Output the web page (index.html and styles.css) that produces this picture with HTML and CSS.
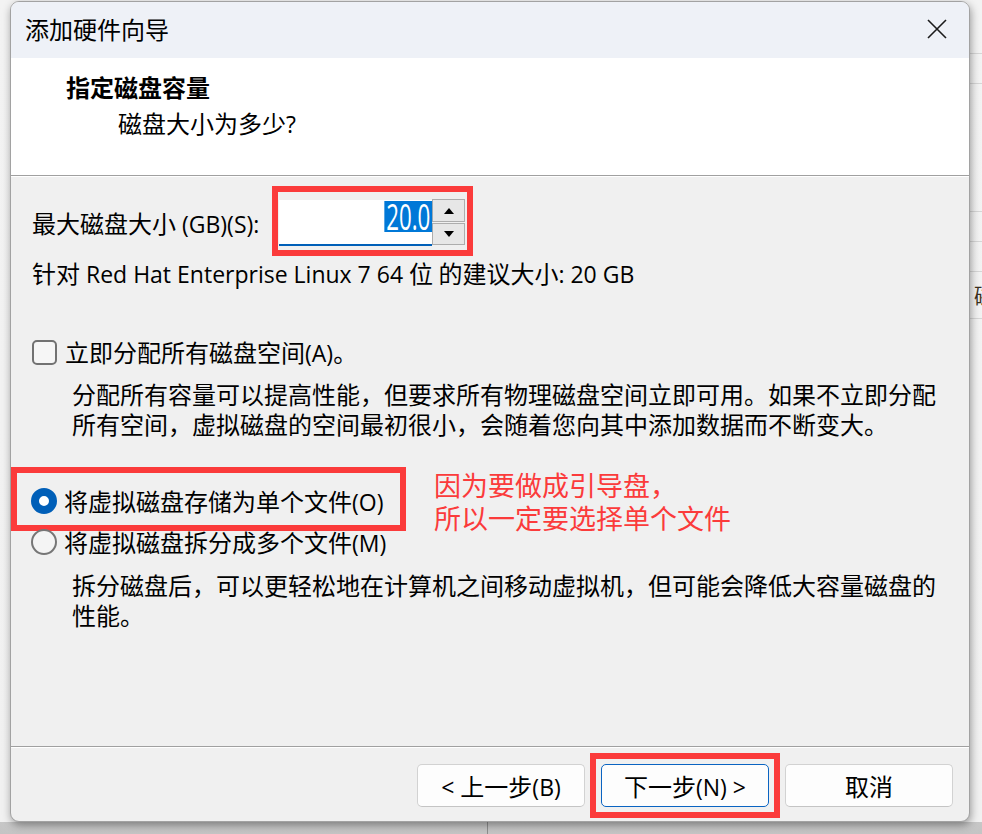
FILE: index.html
```html
<!DOCTYPE html>
<html lang="zh-CN">
<head>
<meta charset="utf-8">
<title>添加硬件向导</title>
<link rel="stylesheet" href="styles.css">
</head>
<body>
<div class="desk">
  <i class="hl" style="top:53px"></i>
  <i class="hl" style="top:83px"></i>
  <i class="hl" style="top:211px"></i>
  <i class="hl" style="top:241px"></i>
  <i class="hl" style="top:271px"></i>
  <i class="hl" style="top:318px"></i>
  <span class="frag">磁</span>
  <i class="vl"></i>
</div>
<div class="window">
  <div class="titlebar">
    <span class="title">添加硬件向导</span>
    <svg class="close" width="20" height="20" viewBox="0 0 20 20"><path d="M1 1L19 19M19 1L1 19" stroke="#1b1b1b" stroke-width="1.6" fill="none"/></svg>
  </div>
  <div class="header">
    <div class="h1">指定磁盘容量</div>
    <div class="h2">磁盘大小为多少<span class="en">?</span></div>
  </div>
  <div class="content">
    <div class="size-row">
      <span class="lbl">最大磁盘大小<span class="en"> (GB)(S):</span></span>
      <div class="spin">
        <div class="field"><span class="sel">20.0</span></div>
        <div class="arrows">
          <div class="arr up"></div>
          <div class="arr down"></div>
        </div>
        <div class="mark mark-spin"></div>
      </div>
    </div>
    <div class="line rec">针对<span class="en"> Red Hat Enterprise Linux 7 64 </span>位 的建议大小<span class="en">: 20 GB</span></div>
    <div class="opt cb-row">
      <span class="cb"></span>
      <span class="line">立即分配所有磁盘空间<span class="en">(A)</span>。</span>
    </div>
    <div class="desc d1">分配所有容量可以提高性能，但要求所有物理磁盘空间立即可用。如果不立即分配<br>所有空间，虚拟磁盘的空间最初很小，会随着您向其中添加数据而不断变大。</div>
    <div class="opt r1">
      <span class="radio on"></span>
      <span class="line">将虚拟磁盘存储为单个文件<span class="en">(O)</span></span>
      <div class="mark mark-radio"></div>
      <div class="note">因为要做成引导盘，<br>所以一定要选择单个文件</div>
    </div>
    <div class="opt r2">
      <span class="radio"></span>
      <span class="line">将虚拟磁盘拆分成多个文件<span class="en">(M)</span></span>
    </div>
    <div class="desc d2">拆分磁盘后，可以更轻松地在计算机之间移动虚拟机，但可能会降低大容量磁盘的<br>性能。</div>
  </div>
  <div class="footer">
    <div class="btn"><span><span class="en">&lt; </span>上一步<span class="en">(B)</span></span></div>
    <div class="btn primary"><span>下一步<span class="en">(N) &gt;</span></span><div class="mark mark-btn"></div></div>
    <div class="btn"><span>取消</span></div>
  </div>
</div>
</body>
</html>
```
FILE: styles.css
```css
html, body {
  margin: 0;
}
body {
  width: 982px;
  height: 834px;
  overflow: hidden;
  position: relative;
  box-sizing: border-box;
  padding: 1px 0 0 10px;
  background: linear-gradient(to bottom, #f3f3f3 0, #f1f1f1 822px, #c7c7c7 822px, #c4c4c4 834px);
  font-family: "Noto Sans CJK SC", sans-serif;
  color: #000;
  text-autospace: no-autospace;
  text-spacing-trim: space-all;
}

/* desktop behind the dialog */
.desk {
  position: absolute;
  inset: 0;
}
.hl {
  position: absolute;
  left: 970px;
  width: 12px;
  height: 1px;
  background: #d6d6d6;
}
.vl {
  position: absolute;
  left: 487px;
  top: 822px;
  width: 1px;
  height: 12px;
  background: #8e8e8e;
}
.frag {
  position: absolute;
  left: 974px;
  top: 281px;
  font-size: 22px;
  line-height: 26px;
  color: #3a3020;
}

.window {
  position: relative;
  width: 960px;
  height: 821px;
  box-sizing: border-box;
  border: 1px solid #a2a2a2;
  border-radius: 9px;
  overflow: hidden;
  display: flex;
  flex-direction: column;
  background: #f0f0f0;
  box-shadow: 1px 3px 9px rgba(0, 0, 0, 0.38);
}

.en {
  font-family: "Open Sans", sans-serif;
  font-size: 23px;
  line-height: 22px;
  letter-spacing: 0;
  font-weight: 400;
}

.titlebar {
  height: 56px;
  flex: none;
  box-sizing: border-box;
  padding: 0 22px 2px 14px;
  background: #eef1f7;
  display: flex;
  align-items: center;
  justify-content: space-between;
}
.title {
  font-size: 24px;
  line-height: 30px;
}
.close {
  display: block;
}

.header {
  height: 118px;
  flex: none;
  box-sizing: border-box;
  background: #fff;
  border-bottom: 1px solid #a0a0a0;
  padding: 14px 0 0 55px;
}
.h1 {
  font-size: 24px;
  line-height: 30px;
  font-weight: 700;
}
.h2 {
  margin: 6px 0 0 52px;
  font-size: 24px;
  line-height: 30px;
}

.content {
  flex: 1;
  border-top: 1px solid #fff;
  padding: 22px 0 0 21px;
  font-size: 24px;
  line-height: 30px;
  display: flex;
  flex-direction: column;
  align-items: flex-start;
}

.size-row {
  display: flex;
  align-items: center;
  height: 47px;
}
.lbl {
  width: 237px;
  margin-right: 10px;
  white-space: nowrap;
  line-height: 30px;
}
.spin {
  position: relative;
  display: flex;
  height: 47px;
}
.field {
  width: 153px;
  height: 46px;
  margin-top: 1px;
  box-sizing: border-box;
  background: #fff;
  border-bottom: 2px solid #005fb8;
  display: flex;
  justify-content: flex-end;
  align-items: flex-start;
}
.sel {
  display: inline-block;
  margin-top: 1px;
  padding: 0 3px;
  background: #0078d7;
  color: #fff;
  font-family: "Open Sans", sans-serif;
  font-size: 36px;
  line-height: 31px;
  transform: scaleX(0.62);
  transform-origin: right center;
}
.arrows {
  width: 33px;
  display: flex;
  flex-direction: column;
  gap: 1px;
}
.arr {
  box-sizing: border-box;
  border: 1px solid #adadad;
  background: #e7e7e7;
  display: flex;
  align-items: center;
  justify-content: center;
}
.arr.up {
  height: 23px;
}
.arr.down {
  height: 22px;
}
.arr::after {
  content: "";
  width: 0;
  height: 0;
  border-left: 5.5px solid transparent;
  border-right: 5.5px solid transparent;
}
.arr.up::after {
  border-bottom: 6px solid #000;
}
.arr.down::after {
  border-top: 6px solid #000;
}

.mark {
  position: absolute;
  box-sizing: border-box;
  border: 6px solid #fb3b3b;
  pointer-events: none;
}
.mark-spin {
  left: -7px;
  top: -13px;
  width: 201px;
  height: 70px;
}

.line {
  line-height: 30px;
  white-space: nowrap;
}
.rec {
  margin-top: 12px;
}

.opt {
  position: relative;
  display: flex;
  align-items: center;
  height: 30px;
}
.cb-row {
  margin-top: 49px;
}
.cb {
  width: 25px;
  height: 25px;
  box-sizing: border-box;
  border: 2px solid #727272;
  border-radius: 5px;
  background: #f6f6f6;
  margin-right: 8px;
}
.desc {
  margin-left: 40px;
  white-space: nowrap;
  line-height: 30px;
}
.d1 {
  margin-top: 12px;
}
.r1 {
  margin-top: 47px;
}
.r2 {
  margin-top: 11px;
}
.d2 {
  margin-top: 13px;
}
.radio {
  width: 26px;
  height: 26px;
  box-sizing: border-box;
  border-radius: 50%;
  border: 2px solid #767676;
  background: #f4f4f4;
  margin: 0 7px 0 -1px;
}
.radio.on {
  border: 8px solid #005fb8;
  background: #fff;
}
.mark-radio {
  left: -21px;
  top: -19px;
  width: 395px;
  height: 64px;
}
.note {
  position: absolute;
  left: 402px;
  top: -18px;
  color: #fb3b3b;
  font-size: 27px;
  line-height: 33px;
  white-space: nowrap;
}

.footer {
  height: 75px;
  flex: none;
  box-sizing: border-box;
  border-top: 1px solid #a0a0a0;
  box-shadow: inset 0 1px #ffffff;
  padding: 17px 16px 0 0;
  display: flex;
  justify-content: flex-end;
  gap: 16px;
}
.btn {
  position: relative;
  width: 168px;
  height: 43px;
  box-sizing: border-box;
  border: 1px solid #d2d2d2;
  border-bottom-color: #c4c4c4;
  border-radius: 5px;
  background: #fdfdfd;
  display: flex;
  align-items: center;
  justify-content: center;
  font-size: 24px;
  line-height: 30px;
  white-space: nowrap;
}
.btn.primary {
  border: 1px solid #0a64c2;
}
.mark-btn {
  inset: -12px;
}
```
